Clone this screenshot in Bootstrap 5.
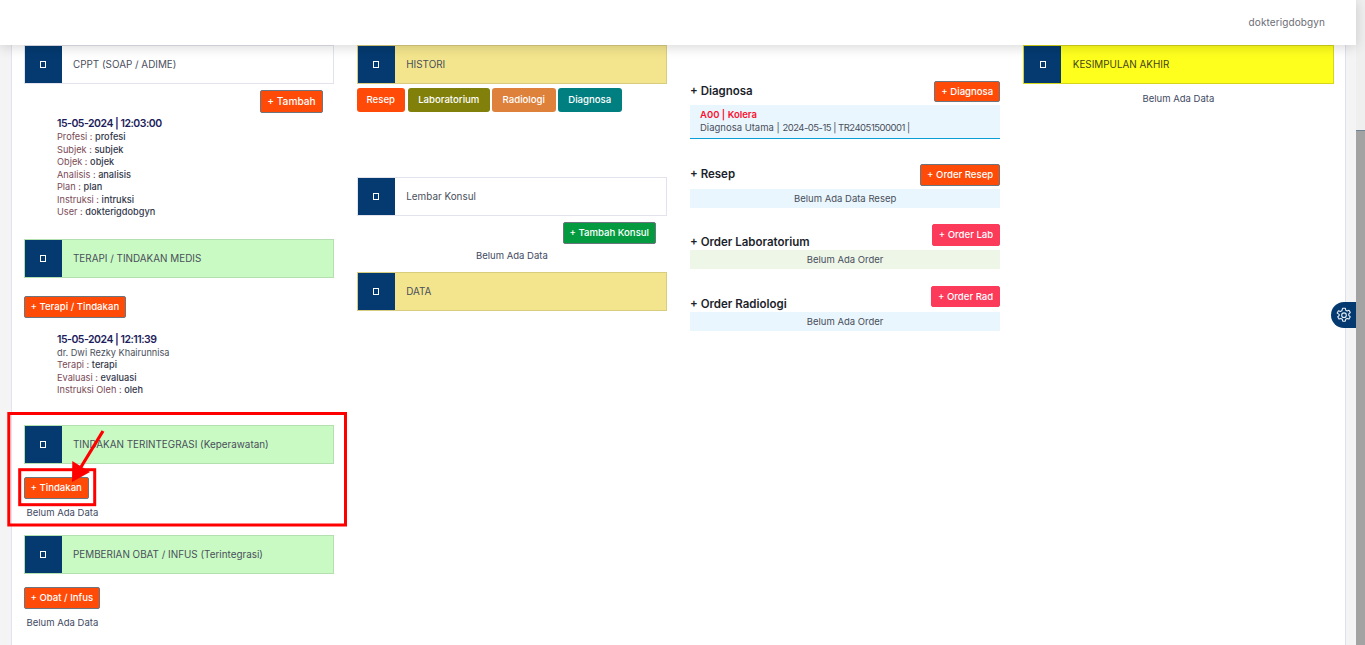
<!DOCTYPE html>
<html lang="id">
<head>
<meta charset="utf-8">
<title>Rekam Medis</title>
<link href="https://cdn.jsdelivr.net/npm/bootstrap@5.3.0/dist/css/bootstrap.min.css" rel="stylesheet">
<style>
html,body{height:645px;overflow:hidden;}
body{font-family:Inter,"Liberation Sans",sans-serif;font-size:9.5px;color:#3f4254;background:#f4f4f5;}
.main-area{width:1356px;height:645px;position:relative;}
.fake-track{width:9px;height:645px;background:#efefef;}
.fake-thumb{height:515px;margin-top:130px;background:#a3a3a3;border-top:1px solid #6f8296;}
.top-bar{height:45px;background:#fff;box-shadow:0 2px 12px rgba(0,0,0,.16);position:relative;z-index:5;padding-right:31px;}
.user-name{font-size:10px;letter-spacing:.1px;color:#6c6d75;}
.shell{margin:0 10px 0 11px;background:#fff;border-left:1px solid #e3e3ee;border-right:1px solid #dfe0ec;height:600px;}
.grid-row{margin-left:-.5px;margin-right:.5px;}
.grid-row>.col-3{padding-right:11px;}
.panel-head{height:39px;border:1px solid #e3e3ee;background:#fff;font-size:9.9px;color:#4a4f5c;}
.panel-ico{width:37px;height:37px;background:#043a70;flex:none;margin-right:11.5px;}
.ico-box{display:block;width:6px;height:7px;border:1.5px solid #fff;}
.tone-green{background:#c9fac3;border-color:#b3e0ae;}
.tone-khaki{background:#f3e58d;border-color:#d8cd7e;}
.tone-yellow{background:#ffff1e;border-color:#d6d61a;color:#45451a;}
.act{font-size:9.6px;font-weight:500;color:#fff;border-radius:2px;border:1px solid #6c757d;height:22px;line-height:1;padding:0 6px;white-space:nowrap;}
.act:hover{color:#fff;}
.act-orange{background:#ff4a08;}
.act-green{background:#049b40;}
.act-red{background:#fc3a5a;border-color:#fc3a5a;}
.act-big{font-size:10.2px;height:23px;}
.h-21{height:21px;}
.tab-btn{font-size:9.6px;font-weight:500;color:#fff;border-radius:3px;height:24px;line-height:1;border:0;padding:0;white-space:nowrap;}
.tab-btn:hover{color:#fff;}
.t-resep{background:#ff4a08;width:48px;}
.t-lab{background:#80800b;width:82px;margin-left:1px;}
.t-rad{background:#de813b;width:64px;}
.t-dx{background:#007f80;width:64px;}
.note-date{font-size:10.5px;font-weight:600;letter-spacing:-.5px;color:#1d1d5c;line-height:15px;}
.note-line{font-size:9.2px;line-height:12.5px;color:#7a4a55;}
.note-line b{font-weight:500;color:#33374a;}
.note-plain{color:#4a4f5c;}
.note-wrap{padding-left:33.5px;}
.empty-note{line-height:12px;color:#3f4a63;}
.empty-left{padding-left:3px;}
.sec-title{font-size:11.5px;font-weight:600;color:#1c1f2b;line-height:14px;}
.info-blue{background:#eaf6fd;}
.info-green{background:#eef6e8;}
.info-row{height:19px;line-height:19px;color:#494e5c;}
.dx-box{height:34px;padding:4px 10px 0;border-bottom:1px solid #0a9fd6;line-height:12.5px;color:#494e5c;}
.dx-code{color:#fb1230;font-weight:600;}
.tight-num{letter-spacing:-.5px;}
.gear-tab{position:absolute;left:1331px;top:302px;width:25px;height:26px;background:#043a70;border-radius:13px 0 0 13px;z-index:6;}
.mark-layer{position:absolute;left:0;top:0;width:1356px;height:645px;z-index:7;pointer-events:none;}
.left-tambah{margin-top:6px;padding-right:11px;}
.first-note{margin-top:3px;}
.gap-terapi{margin-top:20px;}
.btn-terapi{margin-top:18px;}
.second-note{margin-top:14px;}
.gap-tind{margin-top:28px;}
.btn-tind{margin-top:13px;}
.empty-a{margin-top:8px;}
.gap-obat{margin-top:16px;}
.btn-obat{margin-top:13px;}
.empty-b{margin-top:8px;}
.tabs-row{margin-top:4px;gap:2px;}
.gap-konsul{margin-top:65px;}
.konsul-btn-row{margin-top:6px;padding-right:11px;}
.empty-c{margin-top:6px;}
.gap-data{margin-top:10px;}
.empty-d{margin-top:9px;}
.row-dx{margin-top:36px;height:21px;}
.title-dx{margin-bottom:4px;}
.box-dx{margin-top:3px;}
.row-res{margin-top:25px;}
.title-res{margin-bottom:2px;}
.box-res{margin-top:3px;}
.row-lab{margin-top:16px;}
.title-lab{margin-bottom:-3px;}
.box-lab{margin-top:4px;}
.row-rad{margin-top:17px;height:21px;}
.title-rad{margin-bottom:-4px;}
.box-rad{margin-top:5px;}
</style>
</head>
<body class="d-flex">
<div class="main-area">
  <div class="top-bar d-flex align-items-center justify-content-end"><span class="user-name">dokterigdobgyn</span></div>
  <div class="shell">
    <div class="row grid-row">
      <div class="col-3">
        <div class="panel-head d-flex align-items-center"><span class="panel-ico d-flex align-items-center justify-content-center"><i class="ico-box"></i></span>CPPT (SOAP / ADIME)</div>
        <div class="d-flex justify-content-end left-tambah"><a class="btn act act-big act-orange d-flex align-items-center">+ Tambah</a></div>
        <div class="note-wrap first-note">
          <div class="note-date">15-05-2024 | 12:03:00</div>
          <div class="note-line">Profesi : <b>profesi</b></div>
          <div class="note-line">Subjek : <b>subjek</b></div>
          <div class="note-line">Objek : <b>objek</b></div>
          <div class="note-line">Analisis : <b>analisis</b></div>
          <div class="note-line">Plan : <b>plan</b></div>
          <div class="note-line">Instruksi : <b>intruksi</b></div>
          <div class="note-line">User : <b>dokterigdobgyn</b></div>
        </div>
        <div class="panel-head tone-green d-flex align-items-center gap-terapi"><span class="panel-ico d-flex align-items-center justify-content-center"><i class="ico-box"></i></span>TERAPI / TINDAKAN MEDIS</div>
        <a class="btn act act-orange d-inline-flex align-items-center btn-terapi">+ Terapi / Tindakan</a>
        <div class="note-wrap second-note">
          <div class="note-date">15-05-2024 | 12:11:39</div>
          <div class="note-line note-plain">dr. Dwi Rezky Khairunnisa</div>
          <div class="note-line">Terapi : <b>terapi</b></div>
          <div class="note-line">Evaluasi : <b>evaluasi</b></div>
          <div class="note-line">Instruksi Oleh : <b>oleh</b></div>
        </div>
        <div class="panel-head tone-green d-flex align-items-center gap-tind"><span class="panel-ico d-flex align-items-center justify-content-center"><i class="ico-box"></i></span>TINDAKAN TERINTEGRASI (Keperawatan)</div>
        <a class="btn act act-orange d-inline-flex align-items-center btn-tind">+ Tindakan</a>
        <div class="empty-note empty-left empty-a">Belum Ada Data</div>
        <div class="panel-head tone-green d-flex align-items-center gap-obat"><span class="panel-ico d-flex align-items-center justify-content-center"><i class="ico-box"></i></span>PEMBERIAN OBAT / INFUS (Terintegrasi)</div>
        <a class="btn act act-orange d-inline-flex align-items-center btn-obat">+ Obat / Infus</a>
        <div class="empty-note empty-left empty-b">Belum Ada Data</div>
      </div>
      <div class="col-3">
        <div class="panel-head tone-khaki d-flex align-items-center"><span class="panel-ico d-flex align-items-center justify-content-center"><i class="ico-box"></i></span>HISTORI</div>
        <div class="d-flex tabs-row">
          <a class="btn tab-btn t-resep d-flex align-items-center justify-content-center">Resep</a>
          <a class="btn tab-btn t-lab d-flex align-items-center justify-content-center">Laboratorium</a>
          <a class="btn tab-btn t-rad d-flex align-items-center justify-content-center">Radiologi</a>
          <a class="btn tab-btn t-dx d-flex align-items-center justify-content-center">Diagnosa</a>
        </div>
        <div class="panel-head d-flex align-items-center gap-konsul"><span class="panel-ico d-flex align-items-center justify-content-center"><i class="ico-box"></i></span>Lembar Konsul</div>
        <div class="d-flex justify-content-end konsul-btn-row"><a class="btn act act-green d-flex align-items-center">+ Tambah Konsul</a></div>
        <div class="empty-note text-center empty-c">Belum Ada Data</div>
        <div class="panel-head tone-khaki d-flex align-items-center gap-data"><span class="panel-ico d-flex align-items-center justify-content-center"><i class="ico-box"></i></span>DATA</div>
      </div>
      <div class="col-3">
        <div class="d-flex justify-content-between align-items-end row-dx">
          <div class="sec-title title-dx">+ Diagnosa</div>
          <a class="btn act act-orange d-flex align-items-center h-21">+ Diagnosa</a>
        </div>
        <div class="dx-box info-blue box-dx"><div class="dx-code">A00 | Kolera</div><div>Diagnosa Utama | <span class="tight-num">2024-05-15 | TR24051500001 |</span></div></div>
        <div class="d-flex justify-content-between align-items-center row-res">
          <div class="sec-title title-res">+ Resep</div>
          <a class="btn act act-orange d-flex align-items-center">+ Order Resep</a>
        </div>
        <div class="info-row info-blue text-center box-res">Belum Ada Data Resep</div>
        <div class="d-flex justify-content-between align-items-end row-lab">
          <div class="sec-title title-lab">+ Order Laboratorium</div>
          <a class="btn act act-red d-flex align-items-center">+ Order Lab</a>
        </div>
        <div class="info-row info-green text-center box-lab">Belum Ada Order</div>
        <div class="d-flex justify-content-between align-items-end row-rad">
          <div class="sec-title title-rad">+ Order Radiologi</div>
          <a class="btn act act-red d-flex align-items-center h-21">+ Order Rad</a>
        </div>
        <div class="info-row info-blue text-center box-rad">Belum Ada Order</div>
      </div>
      <div class="col-3">
        <div class="panel-head tone-yellow d-flex align-items-center"><span class="panel-ico d-flex align-items-center justify-content-center"><i class="ico-box"></i></span>KESIMPULAN AKHIR</div>
        <div class="empty-note text-center empty-d">Belum Ada Data</div>
      </div>
    </div>
  </div>
  <div class="gear-tab d-flex align-items-center justify-content-center">
    <svg width="16" height="16" viewBox="0 0 16 16" fill="none" stroke="#e8eef5" stroke-width="1.1" stroke-linejoin="round"><path d="M6.700 1.200h2.600l.4 2 1.400.8 1.900-.7 1.300 2.300-1.500 1.300v1.600l1.500 1.300-1.300 2.300-1.900-.7-1.400.8-.4 2H6.700l-.4-2-1.400-.8-1.900.7-1.300-2.300 1.500-1.300V7.400L1.200 6.100l1.300-2.300 1.900.7 1.400-.8z"/><circle cx="8" cy="8.200" r="2.300"/></svg>
  </div>
  <svg class="mark-layer" viewBox="0 0 1356 645" fill="none">
    <rect x="8.800" y="413.500" width="336.700" height="111.500" stroke="#f00" stroke-width="3"/>
    <rect x="19.700" y="469.700" width="75" height="35" stroke="#f00" stroke-width="3"/>
    <path d="M103 431 81 467" stroke="#f00" stroke-width="3.200"/>
    <path d="M72 482 72.300 461 90 472z" fill="#f00"/>
  </svg>
</div>
<div class="fake-track"><div class="fake-thumb"></div></div>
</body>
</html>
